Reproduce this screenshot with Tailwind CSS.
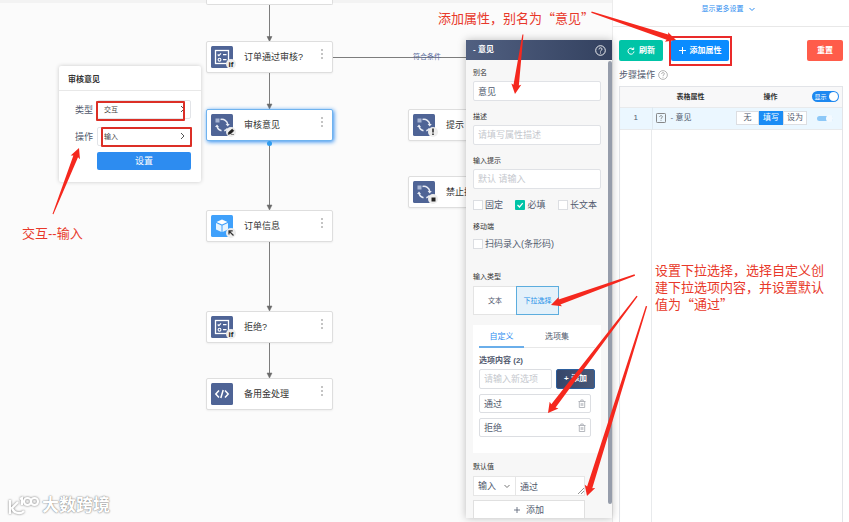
<!DOCTYPE html>
<html lang="zh-CN">
<head>
<meta charset="utf-8">
<meta name="viewport" content="width=device-width, initial-scale=1">
<title>审核意见</title>
<script src="https://cdn.jsdelivr.net/npm/@tailwindcss/browser@4"></script>
</head>
<body class="font-['Liberation_Sans','Noto_Sans_CJK_SC',sans-serif] text-[9px] leading-[12px] text-[#515a6e]">
<svg class="hidden" aria-hidden="true">
  <defs>
    <g id="i-check" fill="none" stroke="#fff" stroke-width="1.3">
      <rect x="4.500" y="4.500" width="13" height="13"/>
      <path d="M6.700 8.500l1.200 1.200L10 7.300M12 8.700h3.500M12 13.700h3.500" stroke-width="1.200"/><circle cx="8.500" cy="13.700" r="1.400" stroke-width="1.100"/>
    </g>
    <g id="i-cycle" fill="none" stroke="#e8ecf5" stroke-width="1.500">
      <path d="M9.500 6.500a6 6 0 0 1 7.300 5M16.500 15.500a6 6 0 0 1-3.200 2.200M6 13a6 6 0 0 0 4.500 4.700"/><path d="M14.600 11h4.200l-2.100 2.500zM4 14h4L6 11.500z" fill="#e8ecf5" stroke="none"/><rect x="4.500" y="5.500" width="4" height="4" fill="#a9b6d4" stroke="none"/>
    </g>
    <g id="i-cube"><path d="M11 4.500l5.500 2.500L11 9.500 5.500 7z" fill="#fff"/><path d="M5 8l5.500 2.500V17L5 14.500zM17 8l-5.500 2.500V17l5.500-2.500z" fill="#e6f4ff"/></g>
    <g id="i-code" fill="none" stroke="#fff" stroke-width="1.500"><path d="M8 7.500L4.800 11 8 14.500M14 7.500l3.200 3.500-3.200 3.500M12.200 7L9.800 15"/></g>
    <g id="i-badge"><circle cx="20" cy="19" r="5" fill="#ededed"/></g>
    <g id="i-trash" fill="none" stroke="#a3a7af"><path d="M.5 2.500h7M2.800 2.300V1h2.400v1.300M1.300 2.500v6h5.400v-6M3.200 4v3M4.800 4v3" stroke-width=".8"/></g>
  </defs>
</svg>

<div class="relative flex min-h-screen overflow-hidden bg-[#fbfbfb]">
  <main class="relative flex-1 border-t-3 border-[#f3f3f3]">
    <!-- connectors -->
    <svg class="absolute inset-x-0 -top-[3px] h-[522px] w-full" aria-hidden="true">
      <path d="M269.500 4v34M269.500 73v32M269.500 141v65M269.500 242v65M269.500 343v31M333 57.500h140" stroke="#7d7d7d" fill="none"/>
      <path d="M267 36.500h5l-2.500 5zM267 104h5l-2.500 5zM267 205h5l-2.500 5zM267 306h5l-2.500 5zM267 373h5l-2.500 5z" fill="#6b6b6b" stroke="#6b6b6b" stroke-width=".5"/>
    </svg>
    <span class="absolute top-[48px] left-[413px] text-[7px] text-[#5a6c9c]">符合条件</span>

    <!-- flow nodes -->
    <div class="absolute -top-[3px] left-[206px] h-[5px] w-[127px] rounded-b-xs border border-t-0 border-[#dedede] bg-white"></div>

    <div class="absolute top-[38px] left-[206px] flex h-8 w-[127px] items-center rounded-xs border border-[#dedede] bg-white pr-2 pl-1 text-[#333] shadow-xs">
      <svg class="h-6 w-[26px] shrink-0" viewBox="0 0 26 24"><rect width="22" height="22" y="1" rx="1.500" fill="#4f6496"/><use href="#i-check" y="1"/><use href="#i-badge"/><text x="17.500" y="22" font-size="8" font-weight="700" fill="#222">if</text></svg>
      <span class="ml-[7px] flex-1">订单通过审核?</span>
      <button class="-mt-2 leading-none" aria-label="更多"><svg class="h-[11px] w-[3px]" fill="#c4c4c4"><path d="M0 1h2v2H0zM0 5h2v2H0zM0 9h2v2H0z"/></svg></button>
    </div>
    <div class="absolute top-[106px] left-[206px] flex h-8 w-[127px] items-center rounded-xs border border-[#6fb3ef] bg-white pr-2 pl-1 text-[#333] shadow-[1px_1px_4px_#2d8cf0]">
      <svg class="h-6 w-[26px] shrink-0" viewBox="0 0 26 24"><rect width="22" height="22" y="1" rx="1.500" fill="#4f6496"/><use href="#i-cycle"/><use href="#i-badge"/><path d="M17 21.500l.7-2.500 3.500-3 1.700 1.700-3 3zM20 21.500h3" fill="#222" stroke="#222" stroke-width=".5"/></svg>
      <span class="ml-[7px] flex-1">审核意见</span>
      <button class="-mt-2 leading-none" aria-label="更多"><svg class="h-[11px] w-[3px]" fill="#c4c4c4"><path d="M0 1h2v2H0zM0 5h2v2H0zM0 9h2v2H0z"/></svg></button>
    </div>
    <div class="absolute top-[138px] left-[267px] size-[5px] rounded-full bg-[#2d9cf0]"></div>
    <div class="absolute top-[207px] left-[206px] flex h-8 w-[127px] items-center rounded-xs border border-[#dedede] bg-white pr-2 pl-1 text-[#333] shadow-xs">
      <svg class="h-6 w-[26px] shrink-0" viewBox="0 0 26 24"><rect width="22" height="22" y="1" rx="1.500" fill="#40a1fb"/><use href="#i-cube" y="1"/><use href="#i-badge"/><path d="M22.500 21.500l-4.500-4.500M18 20.500v-3.700h3.700" fill="none" stroke="#333" stroke-width="1.200"/></svg>
      <span class="ml-[7px] flex-1">订单信息</span>
      <button class="-mt-2 leading-none" aria-label="更多"><svg class="h-[11px] w-[3px]" fill="#c4c4c4"><path d="M0 1h2v2H0zM0 5h2v2H0zM0 9h2v2H0z"/></svg></button>
    </div>
    <div class="absolute top-[308px] left-[206px] flex h-8 w-[127px] items-center rounded-xs border border-[#dedede] bg-white pr-2 pl-1 text-[#333] shadow-xs">
      <svg class="h-6 w-[26px] shrink-0" viewBox="0 0 26 24"><rect width="22" height="22" y="1" rx="1.500" fill="#4f6496"/><use href="#i-check" y="1"/><use href="#i-badge"/><text x="17.500" y="22" font-size="8" font-weight="700" fill="#222">if</text></svg>
      <span class="ml-[7px] flex-1">拒绝?</span>
      <button class="-mt-2 leading-none" aria-label="更多"><svg class="h-[11px] w-[3px]" fill="#c4c4c4"><path d="M0 1h2v2H0zM0 5h2v2H0zM0 9h2v2H0z"/></svg></button>
    </div>
    <div class="absolute top-[375px] left-[206px] flex h-8 w-[127px] items-center rounded-xs border border-[#dedede] bg-white pr-2 pl-1 text-[#333] shadow-xs">
      <svg class="h-6 w-[26px] shrink-0" viewBox="0 0 26 24"><rect width="22" height="22" y="1" rx="1.500" fill="#4f6496"/><use href="#i-code" y="1"/></svg>
      <span class="ml-[7px] flex-1">备用金处理</span>
      <button class="-mt-2 leading-none" aria-label="更多"><svg class="h-[11px] w-[3px]" fill="#c4c4c4"><path d="M0 1h2v2H0zM0 5h2v2H0zM0 9h2v2H0z"/></svg></button>
    </div>
    <div class="absolute top-[106px] left-[408px] flex h-8 w-[127px] items-center rounded-xs border border-[#dedede] bg-white pl-1 text-[#333] shadow-xs">
      <svg class="h-6 w-[26px] shrink-0" viewBox="0 0 26 24"><rect width="22" height="22" y="1" rx="1.500" fill="#4f6496"/><use href="#i-cycle"/><use href="#i-badge"/><path d="M20 15.500v4M20 20.500v1.500" stroke="#222" stroke-width="1.500"/></svg>
      <span class="ml-[7px]">提示</span>
    </div>
    <div class="absolute top-[173px] left-[408px] flex h-8 w-[127px] items-center rounded-xs border border-[#dedede] bg-white pl-1 text-[#333] shadow-xs">
      <svg class="h-6 w-[26px] shrink-0" viewBox="0 0 26 24"><rect width="22" height="22" y="1" rx="1.500" fill="#4f6496"/><use href="#i-cycle"/><use href="#i-badge"/><path d="M18.500 17.500h4v4h-4z" fill="#222"/></svg>
      <span class="ml-[7px]">禁止提交</span>
    </div>

    <!-- node popover -->
    <form class="absolute top-[63px] left-[59px] w-[142px] rounded-xs bg-white pb-3 shadow-[0_0_4px_#00000033]">
      <h2 class="border-b border-[#e8e8e8] pt-[8px] pr-2 pb-[4px] pl-[9px] text-[8px] font-bold text-[#333]">审核意见</h2>
      <div class="grid grid-cols-[18px_1fr] items-center gap-x-1 gap-y-2 pt-[9px] pr-[10px] pl-4">
        <label for="kind">类型</label>
        <div class="relative">
          <select id="kind" class="block h-[19px] w-full appearance-none rounded-xs border border-[#e2e4e8] bg-white px-[6px] text-[7px] text-[#444]"><option>交互</option></select>
          <svg class="pointer-events-none absolute top-[5px] right-[6px] h-2 w-[5px]" fill="none" stroke="#555"><path d="M1 1l3 3-3 3"/></svg>
        </div>
        <label for="op">操作</label>
        <div class="relative">
          <select id="op" class="block h-[19px] w-full appearance-none rounded-xs border border-[#e2e4e8] bg-white px-[6px] text-[7px] text-[#444]"><option>输入</option></select>
          <svg class="pointer-events-none absolute top-[5px] right-[6px] h-2 w-[5px]" fill="none" stroke="#555"><path d="M1 1l3 3-3 3"/></svg>
        </div>
        <button type="button" class="col-start-2 -mt-[2px] h-[18px] rounded-xs bg-[#2d8cf0] text-white">设置</button>
      </div>
    </form>

    <!-- property panel -->
    <section class="absolute top-[37px] right-0 bottom-1 w-[146px] overflow-hidden bg-[#f7f7f7] shadow-[0_0_8px_#00000040]">
      <header class="flex h-5 items-center justify-between bg-linear-to-r from-[#516081] to-[#33415f] pr-[6px] pl-[7px] text-[8px] font-bold text-white">
        <h2>- 意见</h2>
        <button aria-label="帮助"><svg class="size-[11px]" viewBox="0 0 11 11" fill="none" stroke="#fff"><circle cx="5.500" cy="5.500" r="4.800" stroke-width=".9"/><path d="M4 4.400c0-2 3-2 3-.2 0 1.200-1.500 1-1.500 2.300M5.500 7.500v1" stroke-width=".9"/></svg></button>
      </header>
      <div class="absolute top-[21px] right-0 bottom-[14px] w-[4px] rounded bg-[#969dab]"></div>
      <form class="pt-[7px] pr-[11px] pl-[7px]">
        <div class="flex flex-col gap-[10px]">
          <div><label for="alias" class="mb-[2px] block text-[7px] text-[#333]">别名</label><input id="alias" value="意见" class="block h-5 w-full rounded-xs border border-[#e0e2e6] bg-white px-1"></div>
          <div><label for="desc" class="mb-[2px] block text-[7px] text-[#333]">描述</label><input id="desc" placeholder="请填写属性描述" class="block h-5 w-full rounded-xs border border-[#e0e2e6] bg-white px-1 placeholder:text-[#c5c8ce]"></div>
          <div><label for="hint" class="mb-[2px] block text-[7px] text-[#333]">输入提示</label><input id="hint" placeholder="默认 请输入" class="block h-5 w-full rounded-xs border border-[#e0e2e6] bg-white px-1 placeholder:text-[#c5c8ce]"></div>
        </div>
        <div class="mt-[10px] flex justify-between pr-1">
          <label class="flex items-center gap-[2px]"><input type="checkbox" class="size-[10px] appearance-none border border-[#dcdee2] bg-white">固定</label>
          <label class="flex items-center gap-[2px]"><span class="relative flex"><input type="checkbox" checked class="size-[10px] appearance-none rounded-[1px] bg-[#00c4a7]"><svg class="pointer-events-none absolute inset-0 size-[10px]" fill="none" stroke="#fff" stroke-width="1.200"><path d="M2.500 5l2 2 3.200-3.800"/></svg></span>必填</label>
          <label class="flex items-center gap-[2px]"><input type="checkbox" class="size-[10px] appearance-none border border-[#dcdee2] bg-white">长文本</label>
        </div>
        <p class="mt-[10px] text-[7px] text-[#333]">移动端</p>
        <label class="mt-[5px] flex items-center gap-[2px]"><input type="checkbox" class="size-[10px] appearance-none border border-[#dcdee2] bg-white">扫码录入(条形码)</label>
        <p class="mt-[21px] text-[7px] text-[#333]">输入类型</p>
        <div class="mt-[3px] flex text-[7px]">
          <button type="button" class="h-[29px] w-[43px] border border-r-0 border-[#e4e4e4] bg-white">文本</button>
          <button type="button" class="h-[29px] w-[43px] border border-[#5cadde] bg-[#e4f1fa] text-[#1e90e8]">下拉选择</button>
        </div>
        <div class="mt-[10px] bg-white px-[6px] pb-4">
          <div class="flex border-b border-[#e8e8e8]" role="tablist">
            <button type="button" role="tab" class="-mb-px h-[23px] w-[45px] border-b-2 border-[#6aaeea] pt-[3px] text-[8px] text-[#2d8cf0]">自定义</button>
            <button type="button" role="tab" class="h-[22px] w-[66px] pt-[2px] text-[8px]">选项集</button>
          </div>
          <p class="mt-[7px] text-[8px] font-bold text-[#515a6e]">选项内容 (2)</p>
          <div class="mt-[2px] flex gap-1">
            <input aria-label="新选项" placeholder="请输入新选项" class="h-5 w-0 flex-1 rounded-xs border border-[#dcdee2] px-1 placeholder:text-[#c5c8ce]">
            <button type="button" class="h-5 w-[39px] rounded-xs border border-[#2d5f9d] bg-linear-to-r from-[#35456a] to-[#4a5876] text-[8px] font-bold text-white">+ 添加</button>
          </div>
          <div class="mt-[5px] mr-1 flex flex-col gap-[5px]">
            <div class="flex h-[19px] items-center justify-between rounded-xs border border-[#dcdee2] px-1"><span>通过</span><button type="button" aria-label="删除通过"><svg class="h-[9px] w-2"><use href="#i-trash"/></svg></button></div>
            <div class="flex h-[19px] items-center justify-between rounded-xs border border-[#dcdee2] px-1"><span>拒绝</span><button type="button" aria-label="删除拒绝"><svg class="h-[9px] w-2"><use href="#i-trash"/></svg></button></div>
          </div>
        </div>
        <label for="def" class="mt-[8px] block text-[7px] text-[#333]">默认值</label>
        <div class="mt-[3px] mr-4 flex">
          <div class="relative">
            <select aria-label="方式" class="block h-5 w-[43px] appearance-none border border-[#e6e6e6] bg-white px-1"><option>输入</option></select>
            <svg class="pointer-events-none absolute top-2 right-[6px] h-[5px] w-[6px]" fill="none" stroke="#777"><path d="M.5 1l2.500 2.500L5.500 1"/></svg>
          </div>
          <div class="relative flex-1">
            <input id="def" value="通过" class="block h-5 w-full border border-l-0 border-[#e6e6e6] bg-white px-1">
            <svg class="pointer-events-none absolute right-px bottom-[2px] size-[6px]" stroke="#777" stroke-width=".8"><path d="M0 6l6-6M3 6l3-3"/></svg>
          </div>
        </div>
        <div class="mt-[4px] mr-4"><button type="button" class="flex h-5 w-full items-center justify-center gap-[6px] border border-[#e0e0e0] bg-white"><svg class="size-[6px]" stroke="#515a6e" stroke-width=".8"><path d="M0 3h6M3 0v6"/></svg>添加</button></div>
      </form>
    </section>

    <!-- site watermark -->
    <div class="absolute bottom-[5px] left-2 flex items-center gap-[2px] text-[17px] leading-[20px] font-bold text-white [text-shadow:0_0_2px_#888,0_0_1px_#888]">
      <svg class="h-[22px] w-[32px] overflow-visible drop-shadow-[0_0_1px_#777]" viewBox="0 0 32 22" fill="none" stroke="#fff" stroke-width="2.200"><path d="M2 5v14M4 12a7 7 0 0 0 12 4M4 13l6-6M12 4l2-1v7"/><circle cx="19.500" cy="6.500" r="3.500"/><circle cx="26.500" cy="6.500" r="3.500"/></svg>
      <span>大数跨境</span>
    </div>
  </main>

  <aside class="flex w-[237px] shrink-0 flex-col border-l border-[#ececec] bg-white">
    <div class="flex h-[27px] justify-center border-b border-[#e8e8e8] pt-[3px] pr-[6px]">
      <button class="flex h-3 items-center gap-[5px] text-[7px] text-[#2d8cf0]">显示更多设置<svg class="h-[5px] w-[6px]" fill="none" stroke="#2d8cf0"><path d="M.5 1l2.500 2.500L5.500 1"/></svg></button>
    </div>
    <div class="flex flex-1 flex-col px-[6px] pt-[13px]">
      <div class="flex gap-2 text-[8px] font-bold text-white">
        <button class="flex h-[21px] w-[44px] items-center justify-center gap-1 rounded-xs bg-[#00c4a7]"><svg class="size-[8px]" viewBox="0 0 8 8" fill="none" stroke="#fff"><path d="M6.500 2.500A3 3 0 1 0 7 4.500M4.500 2.500h2.200V.500"/></svg>刷新</button>
        <button class="flex h-[21px] w-[58px] items-center justify-center gap-1 rounded-xs bg-[#0a8cff]"><svg class="size-[7px]" stroke="#fff"><path d="M0 3.500h7M3.500 0v7"/></svg>添加属性</button>
        <button class="ml-auto h-[21px] w-[36px] rounded-xs bg-[#ff5c4a]">重置</button>
      </div>
      <div class="mt-[8px] flex items-center gap-[3px]">步骤操作<svg class="size-[10px]" viewBox="0 0 11 11" fill="none" stroke="#999" aria-hidden="true"><circle cx="5.500" cy="5.500" r="4.800" stroke-width=".8"/><path d="M4 4.400c0-2 3-2 3-.2 0 1.200-1.500 1-1.500 2.300M5.500 7.500v1" stroke-width=".9"/></svg></div>
      <div class="mt-[5px] flex flex-1 border-x border-t border-[#e2e4e8] bg-[linear-gradient(#e8eaec,#e8eaec)] bg-size-[1px_100%] bg-position-[31px_0] bg-no-repeat">
        <table class="w-full table-fixed border-collapse self-start text-center">
          <colgroup><col class="w-[32px]"><col class="w-[83px]"><col class="w-[73px]"><col></colgroup>
          <thead class="bg-[#f8f8f9] text-[7px] text-[#333]">
            <tr class="h-5 border-b border-[#e8eaec]">
              <th></th><th class="pr-[6px]">表格属性</th><th class="pr-[2px]">操作</th>
              <th><label class="relative mx-auto flex h-[11px] w-[27px] items-center rounded-full bg-[#1e88f0] pl-[3px] text-[6px] font-normal text-white">显示<input type="checkbox" checked class="absolute top-[1px] right-[1px] size-[9px] appearance-none rounded-full bg-white"></label></th>
            </tr>
          </thead>
          <tbody class="bg-[#ebf7ff]">
            <tr class="h-[22px] border-b border-[#e8eaec]">
              <td class="border-r border-[#dfe9f0] text-[8px]">1</td>
              <td class="pl-[3px] text-left text-[8px]"><span class="flex items-center gap-[5px]"><svg class="size-[10px]" viewBox="0 0 11 11" fill="none" stroke="#777"><rect x=".5" y=".5" width="10" height="10" rx="1"/><path d="M4 4.400c0-2 3-2 3-.2 0 1.200-1.500 1-1.500 2.300M5.500 7.500v1" stroke-width=".9"/></svg>- 意见</span></td>
              <td><div class="flex justify-center text-[8px]"><button class="h-[14px] w-[23px] border border-[#dcdee2] bg-white">无</button><button class="h-[14px] w-[24px] bg-[#1a8cf5] text-white">填写</button><button class="h-[14px] w-[24px] border border-[#dcdee2] bg-white">设为</button></div></td>
              <td><label class="relative mx-auto block h-[5px] w-4 rounded-full bg-[#8cc8f8]" aria-label="显示意见"><input type="checkbox" checked class="absolute -top-px right-0 size-[7px] appearance-none rounded-full bg-[#f4faff]"></label></td>
            </tr>
          </tbody>
        </table>
      </div>
    </div>
  </aside>

  <!-- annotations -->
  <div class="pointer-events-none absolute inset-0 text-[13px] leading-[17px] text-[#e8382a]">
    <div class="absolute top-[101px] left-[96px] h-5 w-[89px] rounded-[1px] border-2 border-[#dc2f26]"></div>
    <div class="absolute top-[127px] left-[101px] h-5 w-[91px] rounded-[1px] border-2 border-[#dc2f26]"></div>
    <div class="absolute top-[36px] left-[669px] h-[30px] w-[63px] border-2 border-[#ea2a2a]"></div>
    <p class="absolute top-[225px] left-[22px]">交互--输入</p>
    <p class="absolute top-[9px] left-[438px] font-['Noto_Sans_CJK_SC',sans-serif]">添加属性，别名为“意见”</p>
    <p class="absolute top-[261px] left-[655px] font-['Noto_Sans_CJK_SC',sans-serif] whitespace-nowrap">设置下拉选择，选择自定义创<br>建下拉选项内容，并设置默认<br>值为“通过”</p>
    <svg class="absolute inset-0 h-full w-full" fill="#f5281e" aria-hidden="true">
      <path transform="translate(79 148) rotate(111.500)" d="M0 0L10-5 9-2.500 71-.5V.5L9 2.500 10 5z"/>
      <path transform="translate(515 94) rotate(-82.400)" d="M0 0L10-5 9-2.700 60-.5V.5L9 2.700 10 5z"/>
      <path transform="translate(676 40) rotate(198.200)" d="M0 0L10-5 9-2.700 89-.7V.7L9 2.700 10 5z"/>
      <path transform="translate(551 305) rotate(-19.700)" d="M0 0L10-5 9-2.700 89-.7V.7L9 2.700 10 5z"/>
      <path transform="translate(548 413) rotate(-52.700)" d="M0 0L10-5.500 9-2.700 147-.7V.7L9 2.700 10 5.500z"/>
      <path transform="translate(587 496) rotate(-72.600)" d="M0 0L10-5.500 9-2.700 199-.7V.7L9 2.700 10 5.500z"/>
    </svg>
  </div>
</div>
</body>
</html>
